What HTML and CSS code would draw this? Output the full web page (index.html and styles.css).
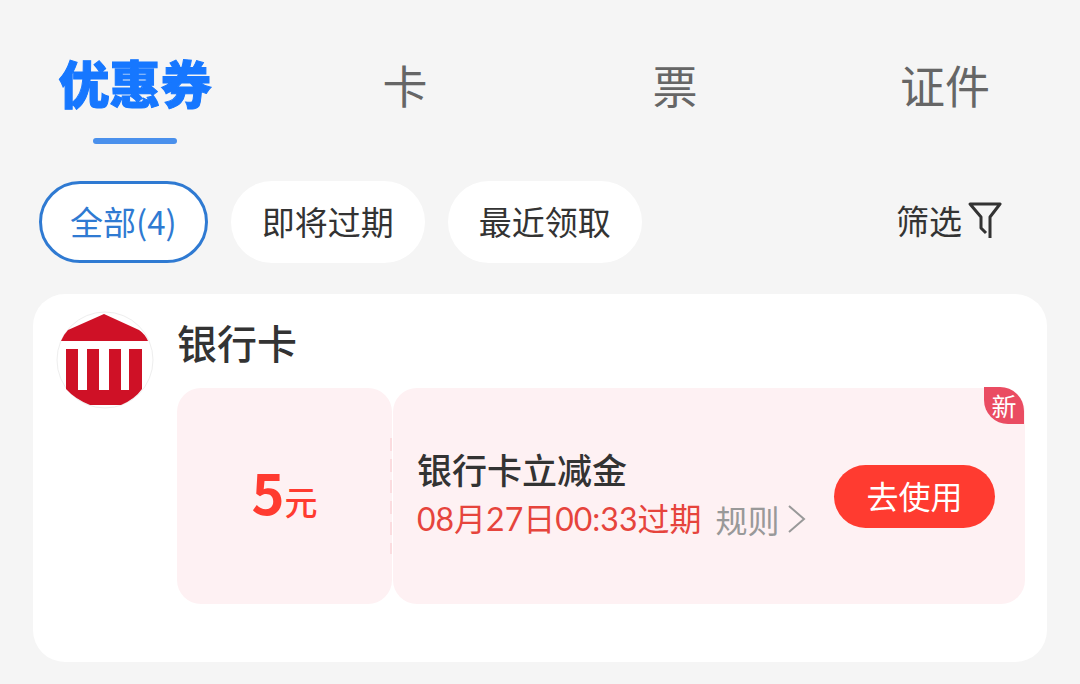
FILE: index.html
```html
<!DOCTYPE html>
<html lang="zh-CN">
<head>
    <meta charset="UTF-8">
    <meta name="viewport" content="width=device-width, initial-scale=1.0">
    <title>优惠券</title>
    <link rel="stylesheet" href="styles.css">
</head>
<body>
    <nav class="tabs">
        <button type="button" class="tab active">优惠券</button>
        <button type="button" class="tab">卡</button>
        <button type="button" class="tab">票</button>
        <button type="button" class="tab">证件</button>
    </nav>

    <div class="filters">
        <button type="button" class="chip selected">全部(4)</button>
        <button type="button" class="chip">即将过期</button>
        <button type="button" class="chip">最近领取</button>
        <button type="button" class="filter-btn">
            筛选
            <svg class="funnel" viewBox="0 0 36 40" aria-hidden="true">
                <path d="M24 38V17L34 4H4L15 17V28L20 33" />
            </svg>
        </button>
    </div>

    <main class="card">
        <svg class="logo" viewBox="0 0 98 98" aria-hidden="true">
            <circle class="logo-ring" cx="49" cy="49" r="48" />
            <path class="logo-mark" d="M48 3L83 19Q89 23 92 30H5Q8 23 12 19Z" />
            <path class="logo-mark" d="M10 38H22V79H31V38H43V79H53V38H65V79H73V38H86V78Q79 88 65 94H34Q19 88 10 78Z" />
        </svg>
        <section class="group">
            <h2 class="group-title">银行卡</h2>
            <article class="coupon">
                <div class="amount">
                    <div><span class="number">5</span>元</div>
                </div>
                <div class="detail">
                    <div class="info">
                        <h3 class="name">银行卡立减金</h3>
                        <div class="meta">
                            <span class="expire">08月27日00:33过期</span>
                            <a href="#" class="rules">规则
                                <svg class="arrow" viewBox="0 0 18 28" aria-hidden="true">
                                    <path d="M1 1L16 14L1 27" />
                                </svg>
                            </a>
                        </div>
                    </div>
                    <button type="button" class="use-btn">去使用</button>
                    <span class="badge">新</span>
                </div>
            </article>
        </section>
    </main>
</body>
</html>
```
FILE: styles.css
```css
* {
    box-sizing: border-box;
}

body {
    margin: 0;
    background-color: #f5f5f5;
    color: #333;
    font-family: "Noto Sans CJK SC", sans-serif;
}

button {
    border: none;
    padding: 0;
    background: none;
    color: inherit;
    font-family: inherit;
    cursor: pointer;
}

h2,
h3 {
    margin: 0;
    font-weight: 500;
}

svg {
    fill: none;
    flex-shrink: 0;
}

/* 顶部标签 */
.tabs {
    display: grid;
    grid-template-columns: repeat(4, 1fr);
    padding-top: 32px;
}

.tab {
    display: flex;
    flex-direction: column;
    align-items: center;
    height: 112px;
    padding-top: 3px;
    color: #666;
    font-size: 45px;
    line-height: 100px;
}

.tab.active {
    padding-top: 0;
    color: #1677ff;
    font-size: 51px;
    font-weight: 900;
    -webkit-text-stroke: 1px #1677ff;
}

.tab.active::after {
    content: "";
    width: 84px;
    height: 6px;
    margin-top: 6px;
    border-radius: 3px;
    background-color: #4a90ec;
}

/* 筛选栏 */
.filters {
    display: flex;
    align-items: center;
    gap: 23px;
    padding: 37px 78px 31px 39px;
}

.chip {
    height: 82px;
    padding: 0 31px 2px;
    border-radius: 41px;
    background-color: #fff;
    font-size: 33px;
}

.chip.selected {
    border: 3px solid #2f7ad2;
    padding: 0 28px 2px;
    color: #2f7ad2;
}

.filter-btn {
    display: flex;
    align-items: center;
    gap: 4px;
    margin-left: auto;
    padding-bottom: 4px;
    font-size: 33px;
}

.funnel {
    width: 36px;
    height: 40px;
    stroke: #333;
    stroke-width: 3;
    stroke-linejoin: round;
}

/* 卡片 */
.card {
    display: flex;
    gap: 23px;
    margin: 0 33px 22px;
    padding: 17px 22px 58px 23px;
    border-radius: 32px;
    background-color: #fff;
}

.logo {
    width: 98px;
    height: 98px;
}

.logo-ring {
    stroke: #eee;
}

.logo-mark {
    fill: #cf1126;
}

.group {
    flex: 1;
}

.group-title {
    font-size: 40px;
    line-height: 62px;
}

.coupon {
    display: flex;
    gap: 1px;
    min-height: 216px;
    margin-top: 15px;
}

.amount,
.detail {
    position: relative;
    display: flex;
    align-items: center;
    border-radius: 24px;
    background-color: #fef1f3;
}

.amount {
    flex: 0 0 215px;
    justify-content: center;
    color: #ff3b30;
    font-size: 33px;
    font-weight: 500;
    line-height: 80px;
}

.amount::after {
    content: "";
    position: absolute;
    top: 50px;
    right: 0;
    bottom: 50px;
    width: 2px;
    background: repeating-linear-gradient(#fbdcdf 0 13px, transparent 13px 21px);
}

.number {
    font-size: 56px;
    font-weight: 700;
    line-height: 80px;
}

.detail {
    flex: 1;
    justify-content: space-between;
    padding: 0 30px 0 24px;
}

.info {
    padding-bottom: 4px;
}

.name {
    font-size: 35px;
    line-height: 50px;
}

.meta {
    display: flex;
    gap: 14px;
    font-size: 32px;
    line-height: 50px;
}

.expire {
    color: #e6443c;
    font-family: Lato, "Noto Sans CJK SC", sans-serif;
}

.rules {
    display: flex;
    align-items: center;
    gap: 8px;
    color: #999;
    text-decoration: none;
}

.arrow {
    width: 18px;
    height: 28px;
    stroke: #999;
    stroke-width: 2;
}

.use-btn {
    width: 161px;
    height: 63px;
    padding-bottom: 2px;
    border-radius: 32px;
    background-color: #ff3b30;
    color: #fff;
    font-size: 32px;
}

.badge {
    position: absolute;
    top: -1px;
    right: 1px;
    width: 40px;
    height: 37px;
    border-radius: 0 24px 0 24px;
    background-color: #ea4c62;
    color: #fff;
    font-size: 25px;
    line-height: 36px;
    text-align: center;
}
```
